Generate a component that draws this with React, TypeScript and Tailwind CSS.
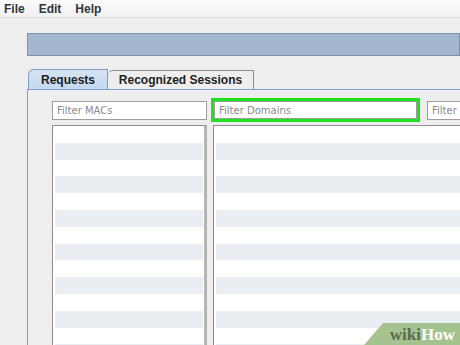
import React from "react";

const rows = Array.from({ length: 14 }, (_, i) => i);

function Stripes() {
  return (
    <div className="flex flex-col">
      {rows.map((i) => (
        <div
          key={i}
          className={i % 2 === 1 ? "h-[16.8px] bg-[#eaedf1]" : "h-[16.8px] bg-white"}
        />
      ))}
    </div>
  );
}

export default function App() {
  return (
    <div className="relative w-[460px] h-[345px] overflow-hidden bg-[#eeeeee] font-['Liberation_Sans',Arial,sans-serif]">
      {/* menu bar */}
      <div className="h-[18px] flex items-center gap-[14px] pl-[4px] bg-gradient-to-b from-[#fbfbfb] to-[#f1f1f1] border-b border-[#dcdcdc] text-[12px] font-bold text-[#2f3640]">
        <span>File</span>
        <span>Edit</span>
        <span>Help</span>
      </div>

      <div className="pl-[27px] pt-[15px]">
        {/* blue toolbar */}
        <div className="h-[23px] bg-[#a3b8ce] border border-[#7e91a6]" />

        {/* tabs */}
        <div className="mt-[13px] flex items-end h-[20px] pl-[1px]">
          <div className="h-[20px] w-[80px] flex items-center justify-center rounded-tl-[6px] bg-gradient-to-b from-[#d6e4f3] to-[#c4d8ee] border border-b-0 border-[#7f9cc4] text-[12px] font-bold text-[#222]">
            Requests
          </div>
          <div className="h-[19px] w-[146px] flex items-center justify-center rounded-tl-[5px] bg-[#eeeeee] border border-l-0 border-b-0 border-[#8f8f8f] text-[12px] font-bold text-[#222]">
            Recognized Sessions
          </div>
        </div>

        {/* panel */}
        <div className="h-[260px] border-l border-t border-[#7c9fd6] pl-[24px] pt-[8px] overflow-hidden">
          <div className="flex items-center font-['DejaVu_Sans',Verdana,sans-serif] text-[10px] text-[#8a8a8a]">
            <div className="shrink-0 w-[155px] h-[19px] bg-white border border-[#9d9d9d] flex items-center pl-[4px]">
              Filter MACs
            </div>
            <div className="shrink-0 ml-[4px] w-[209px] h-[24px] border-[3px] border-[#1fe21f] flex">
              <div className="flex-1 bg-white border border-[#9d9d9d] flex items-center pl-[4px]">
                Filter Domains
              </div>
            </div>
            <div className="shrink-0 ml-[7px] w-[60px] h-[19px] bg-white border border-[#9d9d9d] flex items-center pl-[4px]">
              Filter
            </div>
          </div>

          <div className="mt-[3px] flex">
            <div className="shrink-0 w-[155px] h-[240px] bg-white border border-[#8e8e8e] border-r-[3px] border-r-[#b5b5b5] pl-[2px] pr-[1px]">
              <Stripes />
            </div>
            <div className="shrink-0 ml-[6px] w-[260px] h-[240px] bg-white border border-[#8e8e8e] pl-[2px]">
              <Stripes />
            </div>
          </div>
        </div>
      </div>

      {/* watermark */}
      <div className="absolute right-0 bottom-0 w-[96px] h-[22px] bg-[#a5c38e] [clip-path:polygon(19px_0,100%_0,100%_100%,0_100%)] flex items-center justify-end pr-[5px] font-['Liberation_Serif',serif] font-bold text-[17px] leading-none">
        <span className="text-[#5e6a55]">wiki</span>
        <span className="text-white">How</span>
      </div>
    </div>
  );
}
